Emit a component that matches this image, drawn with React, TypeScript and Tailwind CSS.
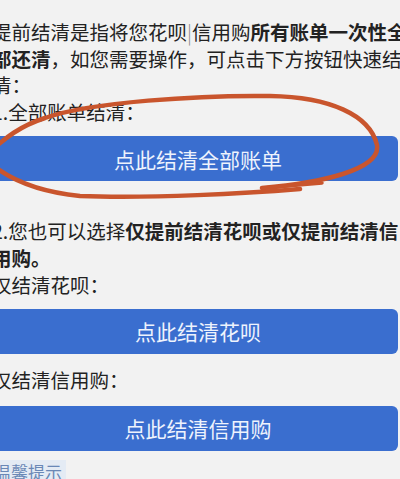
import React from "react";

const font = { fontFamily: '"Noto Sans CJK SC", "Noto Sans", sans-serif' };

function Btn({ children }: { children: React.ReactNode }) {
  return (
    <div className="h-[45px] w-[406px] rounded-[6px] bg-[#3a6ecf] flex items-center justify-center text-[21px] text-[#eef3fd]">
      <span className="pl-[6px]">{children}</span>
    </div>
  );
}

export default function App() {
  return (
    <div
      className="relative w-[400px] h-[479px] overflow-hidden bg-[#f2f2f2] text-[#222]"
      style={font}
    >
      <div className="ml-[-8px] pt-[19px] text-[19.5px] leading-[26.6px] whitespace-nowrap">
        <div>
          提前结清是指将您花呗<span className="text-[#888] font-light">|</span>信用购
          <b className="font-bold">所有账单一次性全</b>
        </div>
        <div>
          <b className="font-bold">部还清</b>，如您需要操作，可点击下方按钮快速结
        </div>
        <div>清：</div>
        <div>1.全部账单结清：</div>
        <div className="mt-[11px]">
          <Btn>点此结清全部账单</Btn>
        </div>
        <div className="mt-[37px]">
          2.您也可以选择<b className="font-bold">仅提前结清花呗或仅提前结清信</b>
        </div>
        <div>
          <b className="font-bold">用购。</b>
        </div>
        <div>仅结清花呗：</div>
        <div className="mt-[11px]">
          <Btn>点此结清花呗</Btn>
        </div>
        <div className="mt-[13px]">仅结清信用购：</div>
        <div className="mt-[12px]">
          <Btn>点此结清信用购</Btn>
        </div>
        <div className="mt-[9px] inline-block bg-[#e4ebf4] text-[#6a88b6] text-[17px] leading-[24px] pl-[2px] pr-[4px]">
          温馨提示
        </div>
      </div>
      <svg
        className="absolute left-0 top-0 pointer-events-none"
        width="400"
        height="479"
        viewBox="0 0 400 479"
      >
        <g fill="none" stroke="#c9552d" strokeWidth="4.5" strokeLinecap="round">
          <path d="M -10 152 C 5 138, 20 126, 45 118 C 90 102, 200 95, 270 96 C 330 97, 370 115, 377 145 C 381 170, 320 183, 262 188" />
          <path d="M -10 163 C 10 180, 40 192, 80 196 C 150 199, 250 193, 300 189" />
          <path d="M 263 188 L 322 183" strokeWidth="3.5" />
        </g>
      </svg>
    </div>
  );
}
